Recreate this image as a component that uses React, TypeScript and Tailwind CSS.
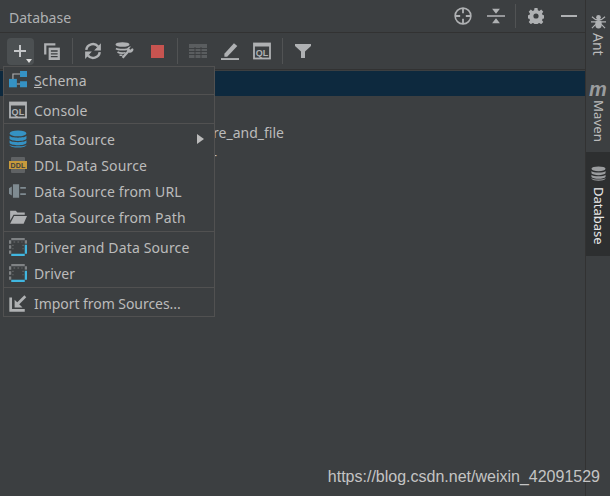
import React from 'react';

const Icon = ({ size = 16, children }: { size?: number; children: React.ReactNode }) => (
  <svg width={size} height={size} viewBox="0 0 16 16" fill="none">
    {children}
  </svg>
);

const GRAY = '#afb1b3';
const BLUE = '#3592c4';

const SchemaIcon = () => (
  <Icon size={18}>
    <path d="M0 7h7v7.500H0z" fill={BLUE} />
    <path d="M9.800 0H16v5.300H9.800zM9.800 9H16v5.500H9.800z" fill={BLUE} />
    <path d="M3.500 7V2.700h6.300M7 11.500h2.800" stroke={GRAY} strokeWidth="1" />
  </Icon>
);

const QlIcon = ({ size = 18 }: { size?: number }) => (
  <svg width={size} height={size} viewBox="0 0 18 18" fill="none">
    <rect x="1" y="1.500" width="16" height="15" stroke={GRAY} strokeWidth="1.800" />
    <rect x="1" y="1.500" width="16" height="3" fill={GRAY} />
    <text x="9" y="14" textAnchor="middle" fontSize="9" fontWeight="700" fill={GRAY} fontFamily="Liberation Sans">
      QL
    </text>
  </svg>
);

const DbIcon = ({ color = BLUE, size = 18 }: { color?: string; size?: number }) => (
  <Icon size={size}>
    <ellipse cx="8" cy="3" rx="7.500" ry="2.600" fill={color} />
    <path d="M.5 5.200c1.500 2.200 13.500 2.200 15 0v2.600c-1.500 2.600-13.500 2.600-15 0zM.5 9.200c1.500 2.200 13.500 2.200 15 0v2.400c-1.500 2.600-13.500 2.600-15 0zM.5 13c1.500 2 13.500 2 15 0v.6c-1.500 2.700-13.500 2.700-15 0z" fill={color} />
  </Icon>
);

const DdlIcon = () => (
  <svg width={18} height={18} viewBox="0 0 18 18" fill="none">
    <rect x="2" y="1" width="14" height="16" rx="1" fill="#5f6264" />
    <rect x="0" y="5" width="18" height="8" fill="#c79a3c" />
    <text x="9" y="12" textAnchor="middle" fontSize="7" fontWeight="700" fill="#3c3f41" fontFamily="Liberation Sans">
      DDL
    </text>
  </svg>
);

const PlugIcon = () => (
  <Icon size={18}>
    <path d="M0 5.500L2.500 4v8L0 10.500z" fill="#7f8b91" />
    <path d="M3.500 2H9v12H3.500z" fill="#7f8b91" />
    <path d="M10 4.500h5V6h-5zM10 10h5v1.500h-5z" fill="#7f8b91" />
  </Icon>
);

const FolderIcon = () => (
  <Icon size={18}>
    <path d="M1 2.500h5l1.500 1.500H14v2H4L1 11z" fill={GRAY} />
    <path d="M4.500 7H16l-3 7H1z" fill={GRAY} />
  </Icon>
);

const DriverIcon = () => (
  <Icon size={18}>
    <path d="M2 0h12v2H2z" fill="#7f8284" />
    <path d="M0 2h2v3H0zM0 6.500h2v3H0zM0 11h2v3H0z" fill="#7f8284" />
    <path d="M14 2h2v3h-2z" fill="#7f8284" />
    <path d="M14 6h2v8h-2zM2 14h12v2H2z" fill="#40b6e0" />
    <path d="M4 3.500h1.500M7.500 3.500H9M11 3.500h1M3.500 6v1M3.500 9v1M12.500 6v1M12.500 9v1" stroke="#6e7173" strokeWidth="1" />
  </Icon>
);

const ImportIcon = () => (
  <Icon size={18}>
    <path d="M1.500 3v11.500H14" stroke={GRAY} strokeWidth="2.400" />
    <path d="M14.500 2L6 10.500" stroke={GRAY} strokeWidth="2.400" />
    <path d="M5 5v7h7z" fill={GRAY} />
  </Icon>
);

const TargetIcon = () => (
  <Icon size={18}>
    <circle cx="8" cy="8" r="7" stroke={GRAY} strokeWidth="1.400" />
    <path d="M8 1v4.500M8 10.500V15M1 8h4.500M10.500 8H15" stroke={GRAY} strokeWidth="1.600" />
  </Icon>
);

const CollapseIcon = () => (
  <Icon size={18}>
    <path d="M0 8h16" stroke={GRAY} strokeWidth="1.400" />
    <path d="M4.500 1.500h7L8 6zM4.500 14.500h7L8 10z" fill={GRAY} />
  </Icon>
);

const GearIcon = () => (
  <Icon size={16}>
    <path
      fillRule="evenodd"
      d="M6.500 0h3l.4 2.300 1.400.6 1.900-1.300 2.100 2.100-1.300 1.900.6 1.400 2.300.4v3l-2.300.4-.6 1.400 1.300 1.900-2.100 2.100-1.900-1.300-1.400.6-.4 2.300h-3l-.4-2.300-1.400-.6-1.900 1.300-2.100-2.100 1.300-1.900-.6-1.400-2.300-.4v-3l2.300-.4.6-1.400-1.300-1.900 2.100-2.100 1.900 1.300 1.400-.6zM8 5.400a2.600 2.600 0 100 5.200 2.600 2.600 0 000-5.200z"
      fill={GRAY}
    />
  </Icon>
);

const CopyIcon = () => (
  <Icon size={18}>
    <path d="M1 1h10v2H3v8H1z" fill={GRAY} />
    <path d="M5 5h10v11H5z" fill={GRAY} />
    <path d="M7 8h6M7 10.500h6M7 13h6" stroke="#3c3f41" strokeWidth="1.200" />
  </Icon>
);

const RefreshIcon = () => (
  <Icon size={18}>
    <path d="M2 7a6 6 0 0 1 10.500-3" stroke={GRAY} strokeWidth="2.200" />
    <path d="M14 9a6 6 0 0 1-10.500 3" stroke={GRAY} strokeWidth="2.200" />
    <path d="M15 1v6.500H9zM1 15V8.500h6z" fill={GRAY} />
  </Icon>
);

const WrenchDbIcon = () => (
  <svg width={20} height={18} viewBox="0 0 20 18" fill="none">
    <ellipse cx="7.500" cy="2.500" rx="7" ry="2.300" fill={GRAY} />
    <path d="M1 6.500c2 1.500 11 1.500 13 0M2.500 10c2 1.200 6 1.200 8 .8M4.500 13.300h3" stroke={GRAY} strokeWidth="1.600" />
    <path d="M18.500 7a3.500 3.500 0 0 1-4.700 3.400L8.500 16.500 6.700 15l5.400-6A3.500 3.500 0 0 1 16 4.500l-1.800 2 1 1.300 2-1.500z" fill={GRAY} />
  </svg>
);

const TableIcon = () => (
  <svg width={18} height={14} viewBox="0 0 18 14" fill="none">
    <rect width="18" height="14" fill="#5a5d5f" />
    <path d="M0 4.500h18M0 7.500h18M0 10.500h18M6 3v11M12 3v11" stroke="#3c3f41" strokeWidth="1" />
  </svg>
);

const PencilIcon = () => (
  <Icon size={18}>
    <path d="M3 10.500L11.500 1l3 2.500L5.500 13H3z" fill={GRAY} />
    <path d="M0 15.200h16" stroke={GRAY} strokeWidth="1.800" />
  </Icon>
);

const FilterIcon = () => (
  <Icon size={16}>
    <path d="M0 1h16v2L10 8.500V15H6V8.500L0 3z" fill={GRAY} />
  </Icon>
);

const AntIcon = () => (
  <Icon size={15}>
    <ellipse cx="8" cy="3.500" rx="2.500" ry="2.500" fill={GRAY} />
    <ellipse cx="8" cy="11" rx="3.500" ry="4.500" fill={GRAY} />
    <path d="M1 3l4 3h6l4-3M0 8.500h16M1 15l4-4M15 15l-4-4" stroke={GRAY} strokeWidth="1.300" />
  </Icon>
);

const Slot = ({ children }: { children: React.ReactNode }) => (
  <div className="flex h-full w-8 items-center justify-center">{children}</div>
);

const ToolbarSep = () => <div className="mx-1 h-[26px] w-px bg-[#515354]" />;

const MenuRow = ({ icon, label, className = '', arrow }: { icon: React.ReactNode; label: React.ReactNode; className?: string; arrow?: boolean }) => (
  <div className={`flex h-[26px] items-center pl-[5px] tracking-[0.14px] ${className}`}>
    <div className="flex w-[18px] justify-center">{icon}</div>
    <span className="ml-[7px] flex-1 whitespace-nowrap">{label}</span>
    {arrow && <div className="mr-[10px] h-0 w-0 border-y-[5px] border-l-[7px] border-y-transparent border-l-[#bbbbbb]" />}
  </div>
);

const MenuSep = ({ className = '' }: { className?: string }) => <div className={`h-px bg-[#515151] ${className}`} />;

export default function App() {
  return (
    <div className="relative flex h-[496px] w-[610px] overflow-hidden bg-[#3c3f41] font-['Noto_Sans',sans-serif] text-[14px] text-[#bbbbbb]">
      {/* Main tool window */}
      <div className="flex w-[585px] flex-col">
        <div className="flex h-[33px] items-center border-b border-[#323232] pl-[9px] pr-[8px]">
          <span className="mt-[2px] flex-1 text-[#afb1b3]">Database</span>
          <div className="flex items-center">
            <TargetIcon />
            <div className="ml-[15px]"><CollapseIcon /></div>
            <div className="ml-[10px] h-[24px] w-px bg-[#515354]" />
            <div className="ml-[12px]"><GearIcon /></div>
            <div className="ml-[17px] h-[2px] w-4 bg-[#afb1b3]" />
          </div>
        </div>

        <div className="flex h-[37px] items-center border-b border-[#323232] pl-1">
          <Slot>
            <div className="relative flex h-[27px] w-[27px] items-center justify-center rounded-[4px] bg-[#4c5052]">
              <svg width={14} height={14} viewBox="0 0 14 14">
                <path d="M7 1v12M1 7h12" stroke="#c4c6c8" strokeWidth="2" />
              </svg>
              <div className="absolute bottom-[2px] right-[2px] h-0 w-0 border-x-[3.5px] border-t-[4px] border-x-transparent border-t-[#dddddd]" />
            </div>
          </Slot>
          <Slot><CopyIcon /></Slot>
          <ToolbarSep />
          <Slot><RefreshIcon /></Slot>
          <Slot><WrenchDbIcon /></Slot>
          <Slot><div className="h-[13px] w-[13px] bg-[#c75450]" /></Slot>
          <ToolbarSep />
          <Slot><TableIcon /></Slot>
          <Slot><PencilIcon /></Slot>
          <Slot><QlIcon /></Slot>
          <ToolbarSep />
          <Slot><FilterIcon /></Slot>
        </div>

        {/* Tree */}
        <div className="mt-px h-[25px] bg-[#0d293e]" />
        <div className="mt-[26px] flex h-[21px] items-center justify-end pr-[301px] leading-none">store_and_file</div>
        <div className="mt-px flex h-[21px] items-center justify-end pr-[368px] leading-none">-</div>
      </div>

      {/* Right stripe */}
      <div className="flex w-[25px] flex-col items-center border-l border-[#323232]">
        <div className="mt-[14px]"><AntIcon /></div>
        <span className="mt-[4px] text-[14px] leading-none [writing-mode:vertical-rl]">Ant</span>
        <span className="mt-[24px] h-[18px] font-['Liberation_Sans',sans-serif] text-[20px] font-bold italic leading-[18px] text-[#9a9c9e]">m</span>
        <span className="mt-[2px] text-[13.300px] leading-none [writing-mode:vertical-rl]">Maven</span>
        <div className="mt-[10px] flex h-[104px] w-full flex-col items-center bg-[#2d2f30]">
          <div className="mt-[14px]"><DbIcon color="#9a9c9e" size={15} /></div>
          <span className="mt-[6px] text-[13px] leading-none text-[#e8e8e8] [writing-mode:vertical-rl]">Database</span>
        </div>
      </div>

      {/* Add popup menu */}
      <div className="absolute left-[3px] top-[66px] h-[251px] w-[212px] border border-[#515151] bg-[#3c3f41]">
        <MenuRow icon={<SchemaIcon />} label={<><span className="underline">S</span>chema</>} />
        <MenuSep className="mt-px h-[2px]" />
        <MenuRow className="mt-[2px]" icon={<QlIcon />} label="Console" />
        <MenuSep />
        <MenuRow className="mt-[2px]" icon={<DbIcon />} label="Data Source" arrow />
        <MenuRow icon={<DdlIcon />} label="DDL Data Source" />
        <MenuRow icon={<PlugIcon />} label="Data Source from URL" />
        <MenuRow icon={<FolderIcon />} label="Data Source from Path" />
        <MenuSep className="mt-px" />
        <MenuRow className="mt-[2px]" icon={<DriverIcon />} label="Driver and Data Source" />
        <MenuRow icon={<DriverIcon />} label="Driver" />
        <MenuSep className="mt-px" />
        <MenuRow className="mt-[2px]" icon={<ImportIcon />} label={<span className="tracking-[-0.05px]">Import from Sources...</span>} />
      </div>

      {/* Watermark */}
      <span className="absolute right-[10px] top-[467px] font-['Liberation_Sans',sans-serif] text-[16px] leading-[20px] text-[#c4c4c4]">
        https://blog.csdn.net/weixin_42091529
      </span>
    </div>
  );
}
